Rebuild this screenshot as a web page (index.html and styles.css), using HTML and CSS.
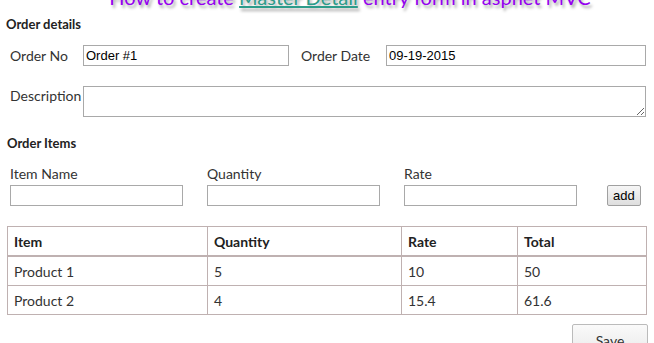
FILE: index.html
```html
<!DOCTYPE html>
<html lang="en">
<head>
  <meta charset="UTF-8">
  <title>Master Detail entry form</title>
  <link rel="stylesheet" href="styles.css">
</head>
<body>
  <h2 class="page-title">How to create <a href="#">Master Detail</a> entry form in aspnet MVC</h2>

  <div class="section-title">Order details</div>
  <div class="form-row">
    <label class="lbl lbl-no">Order No</label>
    <input type="text" class="txt txt-no" value="Order #1">
    <label class="lbl lbl-date">Order Date</label>
    <input type="text" class="txt txt-date" value="09-19-2015">
  </div>
  <div class="form-row desc-row">
    <label class="lbl lbl-no">Description</label>
    <textarea class="txt txt-desc"></textarea>
  </div>

  <div class="section-title items-title">Order Items</div>
  <div class="item-row">
    <div class="item-field">
      <label>Item Name</label>
      <input type="text" class="txt">
    </div>
    <div class="item-field">
      <label>Quantity</label>
      <input type="text" class="txt">
    </div>
    <div class="item-field">
      <label>Rate</label>
      <input type="text" class="txt">
    </div>
    <button class="btn-add">add</button>
  </div>

  <table class="items">
    <thead>
      <tr><th class="c1">Item</th><th class="c2">Quantity</th><th class="c3">Rate</th><th>Total</th></tr>
    </thead>
    <tbody>
      <tr><td>Product 1</td><td>5</td><td>10</td><td>50</td></tr>
      <tr><td>Product 2</td><td>4</td><td>15.4</td><td>61.6</td></tr>
    </tbody>
  </table>

  <div class="save-row"><button class="btn-save">Save</button></div>
</body>
</html>
```

FILE: styles.css
```css
body { margin: 0; padding: 0 6px 0 6px; font-family: "Segoe UI", Lato, "Noto Sans", sans-serif; font-size: 14px; color: #333; background: #fff; overflow: hidden; }
.page-title { margin: -17px 0 0 0; height: 28px; line-height: 28px; white-space: nowrap; text-align: center; font-size: 20px; font-weight: normal; color: #9400f0; text-shadow: 2px 3px 3px #aaa; padding-left: 46px; }
.page-title a { color: #2c9c8a; text-decoration: underline; }
.section-title { font-weight: bold; font-size: 13px; color: #222; margin-top: 3px; height: 20px; line-height: 20px; }
.form-row { display: flex; align-items: center; margin: 11px 0 0 4px; height: 21px; }
.lbl { color: #333; }
.lbl-no { width: 73px; }
.lbl-date { width: 85px; margin-left: 12px; }
.txt { box-sizing: border-box; border: 1px solid #a9a9a9; height: 21px; font-family: "Liberation Sans", Arial, sans-serif; font-size: 13px; padding: 0 2px; color: #000; margin: 0; }
.txt-no { width: 206px; }
.txt-date { width: 260px; }
.desc-row { align-items: flex-start; height: 30px; margin-top: 20px; }
.desc-row .lbl { margin-top: 1px; }
.txt-desc { width: 563px; height: 31px; resize: both; }
.items-title { margin: 17px 0 0 1px; }
.item-row { display: flex; align-items: flex-end; margin: 11px 0 0 4px; }
.item-field { display: flex; flex-direction: column; width: 197px; }
.item-field label { height: 21px; line-height: 20px; }
.item-field .txt { width: 173px; }
.btn-add { margin-left: 6px; height: 21px; padding: 0 5px; font-family: "Liberation Sans", Arial, sans-serif; font-size: 13px; color: #000; border: 1px solid #a0a0a0; border-radius: 2px; background: linear-gradient(#f6f6f6, #dedede); }
.items { border-collapse: collapse; margin: 20px 0 0 1px; width: 640px; color: #333; }
.items th, .items td { border: 1px solid #bfb1b1; text-align: left; padding: 0 6px; height: 28px; }
.items th { color: #222; border-bottom: 2px solid #bfb1b1; height: 28px; }
.items .c1 { width: 187px; }
.items .c2 { width: 181px; }
.items .c3 { width: 103px; }
.save-row { display: flex; justify-content: flex-end; margin-top: 9px; }
.btn-save { width: 76px; height: 32px; margin-right: 0; font-family: "Segoe UI", Lato, sans-serif; font-size: 14px; color: #333; border: 1px solid #bbb; border-radius: 2px; background: linear-gradient(#fafafa, #e9e9e9); }
```
